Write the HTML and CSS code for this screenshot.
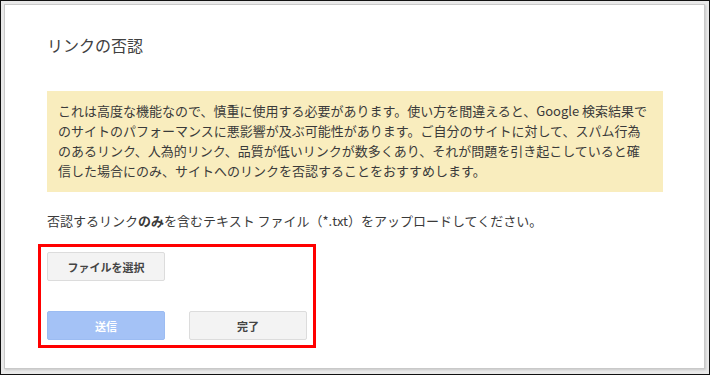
FILE: index.html
```html
<!DOCTYPE html>
<html lang="ja">
<head>
    <meta charset="UTF-8">
    <meta name="viewport" content="width=device-width, initial-scale=1.0">
    <title>リンクの否認</title>
    <link rel="stylesheet" href="styles.css">
</head>
<body>

    <!-- FRAME -->
    <div class="frame">

        <!-- DIALOG -->
        <div class="dialog">
            <div class="dialog-title">リンクの否認</div>

            <div class="warning">
                これは高度な機能なので、慎重に使用する必要があります。使い方を間違えると、Google 検索結果で<br>
                のサイトのパフォーマンスに悪影響が及ぶ可能性があります。ご自分のサイトに対して、スパム行為<br>
                のあるリンク、人為的リンク、品質が低いリンクが数多くあり、それが問題を引き起こしていると確<br>
                信した場合にのみ、サイトへのリンクを否認することをおすすめします。
            </div>

            <p class="upload-text">否認するリンク<b>のみ</b>を含むテキスト ファイル（*.txt）をアップロードしてください。</p>

            <!-- highlighted area -->
            <div class="highlight">
                <button class="btn">ファイルを選択</button>
                <div class="btn-row">
                    <button class="btn btn-primary" disabled>送信</button>
                    <button class="btn">完了</button>
                </div>
            </div>
        </div>

    </div>

</body>
</html>
```

FILE: styles.css
```css
body {
    margin: 0;
    font-family: "Noto Sans CJK JP", "Liberation Sans", sans-serif;
    color: #333;
}

/* FRAME */
.frame {
    width: 710px;
    height: 375px;
    box-sizing: border-box;
    border: 1px solid #111;
    background: #e9e9e9;
    padding: 3px 4px 5px 3px;
}

/* DIALOG */
.dialog {
    height: 100%;
    box-sizing: border-box;
    background: #fff;
    border: 1px solid #c9c9c9;
    box-shadow: 1px 1px 2px rgba(0,0,0,0.15);
    padding: 30px 42px 0 42px;
}

.dialog-title {
    font-size: 16px;
    line-height: 20px;
    color: #404040;
}

/* WARNING BOX */
.warning {
    width: 616px;
    box-sizing: border-box;
    margin-top: 36px;
    background: #f9edbe;
    padding: 10px 0 11px 11px;
    font-size: 13px;
    line-height: 20px;
    color: #3a3a3a;
    white-space: nowrap;
    overflow: visible;
}

.upload-text {
    margin: 19px 0 13px 0;
    font-size: 13px;
    line-height: 20px;
    color: #3a3a3a;
}

/* HIGHLIGHT (red annotation) */
.highlight {
    width: 266px;
    border: 3px solid #f00;
    margin-left: -9px;
    padding: 5px 0 5px 6px;
}

.btn-row {
    display: flex;
    gap: 24px;
    margin-top: 30px;
}

/* BUTTONS */
.btn {
    display: block;
    width: 118px;
    height: 29px;
    font-family: inherit;
    font-size: 11px;
    font-weight: bold;
    color: #444;
    background: #f3f3f3;
    border: 1px solid #dcdcdc;
    border-radius: 2px;
    padding: 0;
}

.btn-primary {
    background: #a4c2f6;
    border-color: #9cbcf2;
    color: #fff;
}
```
